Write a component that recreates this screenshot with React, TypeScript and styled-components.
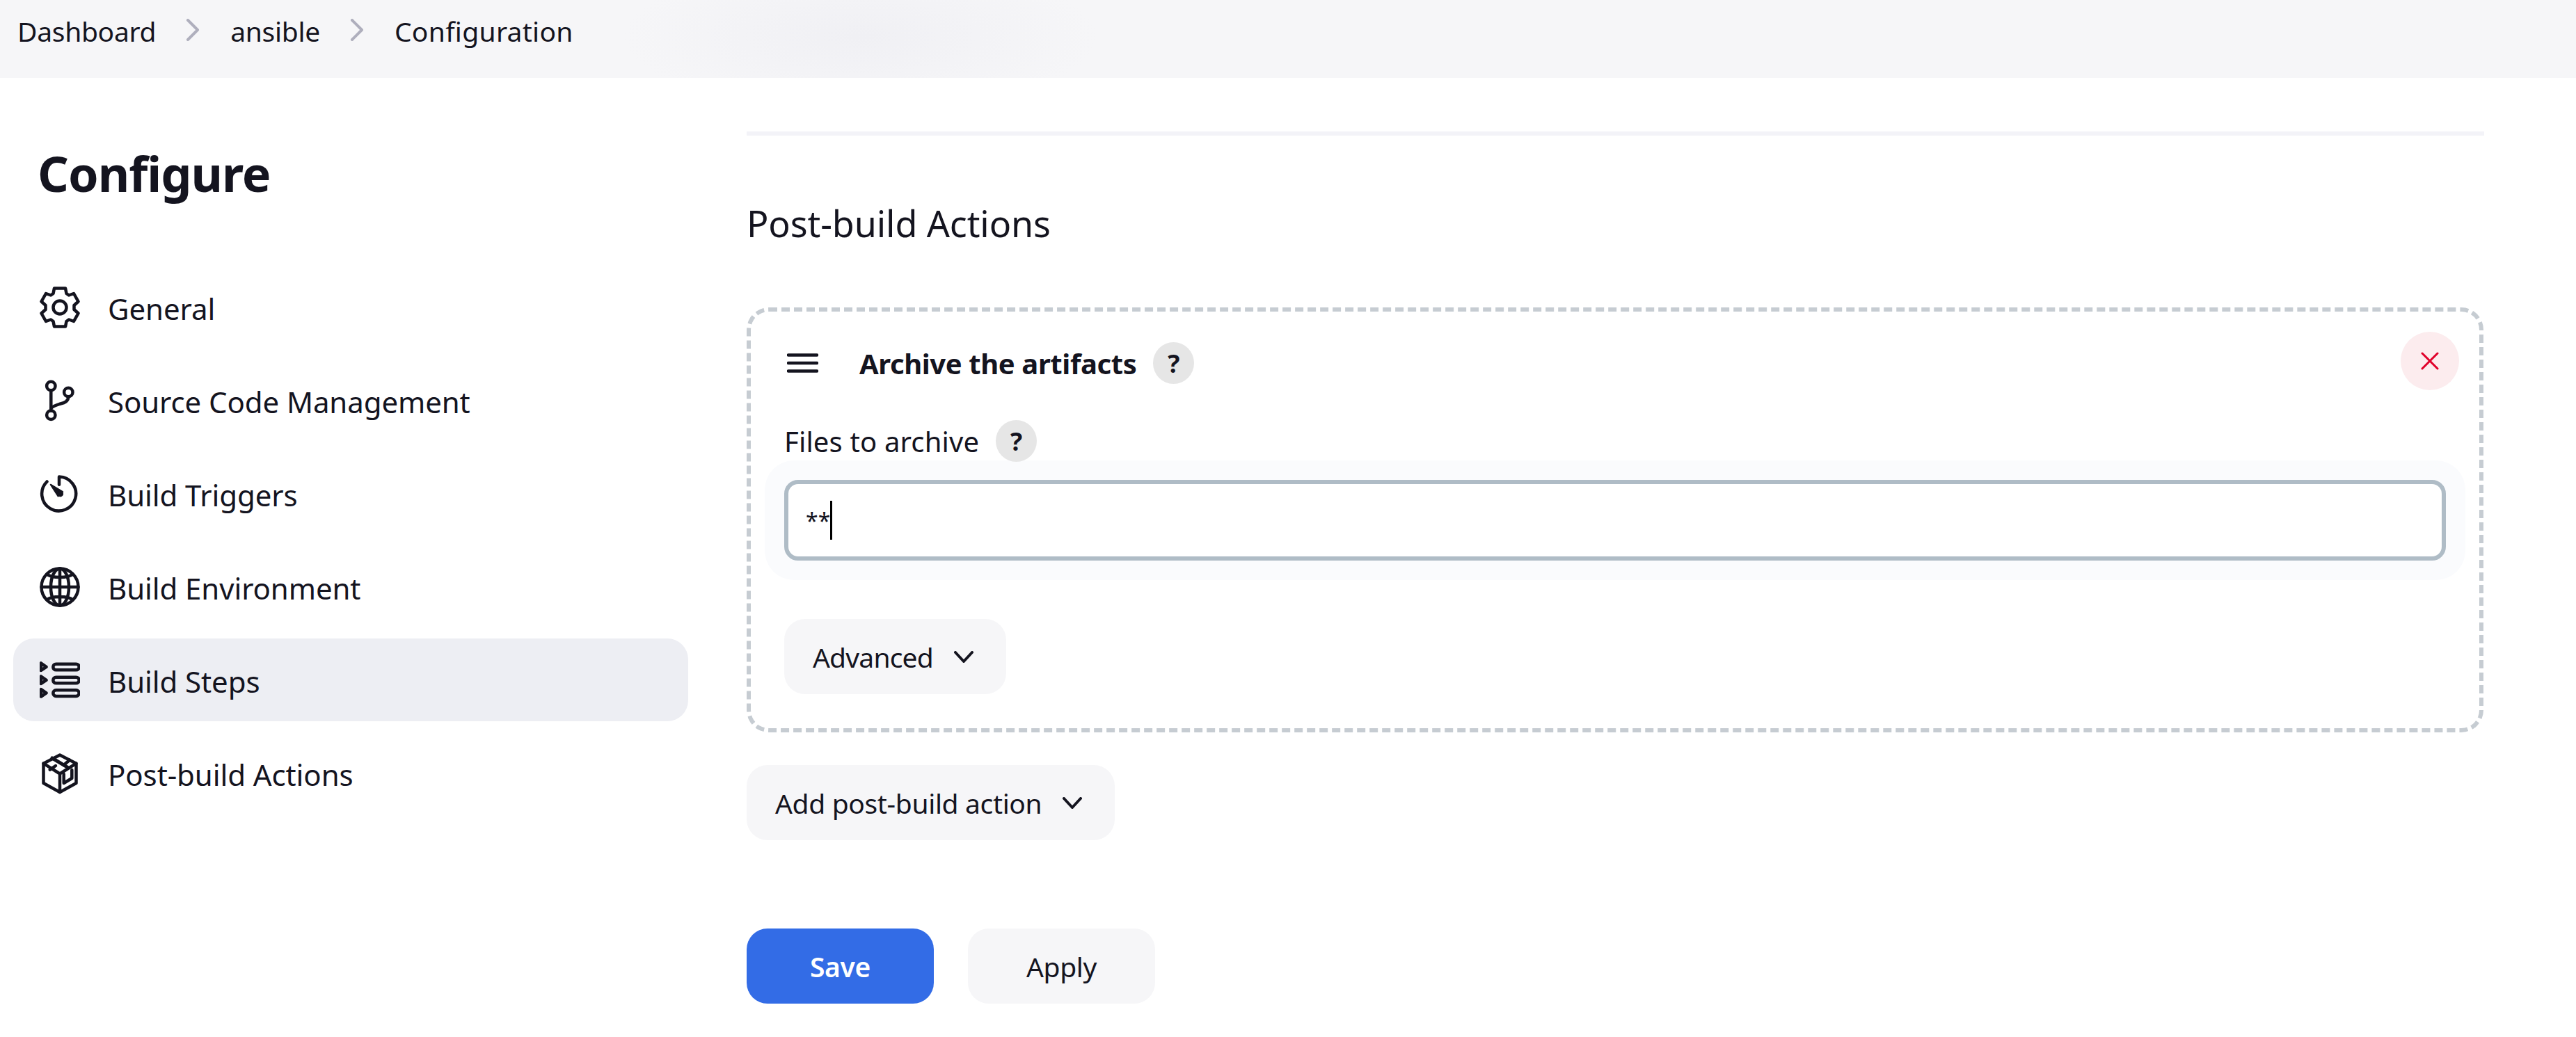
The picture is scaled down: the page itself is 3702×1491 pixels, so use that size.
import styled, { createGlobalStyle } from 'styled-components';

const INK = '#14141f';
const FONT = `'Noto Sans', 'Open Sans', sans-serif`;

const GlobalStyle = createGlobalStyle`
	html, body {
		margin: 0;
		padding: 0;
		background: #fff;
		overflow: hidden;
	}
	body {
		font-family: ${FONT};
		color: ${INK};
	}
`;

const Page = styled.div`
	width: 3702px;
	height: 1491px;
	overflow: hidden;
`;

const TopBar = styled.div`
	height: 112px;
	box-sizing: border-box;
	padding: 23px 0 0 25px;
	display: flex;
	align-items: flex-start;
	background: radial-gradient(ellipse 340px 110px at 1237px 53px, #f0f0f4 0%, #f6f6f8 100%);
`;

const Crumb = styled.div<{ $track?: number }>`
	font-size: 39px;
	line-height: 44px;
	letter-spacing: ${p => p.$track ?? -0.3}px;
	white-space: nowrap;
`;

const CrumbSep = styled.svg`
	width: 20px;
	height: 32px;
	margin: 4px 44px 0 43px;
	flex: none;
`;

const Columns = styled.div`
	display: flex;
	align-items: flex-start;
`;

const Sidebar = styled.nav`
	width: 970px;
	margin-left: 19px;
	flex: none;
`;

const SideTitle = styled.h1`
	margin: 0;
	padding: 89px 0 0 35px;
	font-size: 70px;
	line-height: 96px;
	font-weight: 700;
	letter-spacing: -1px;
`;

const SideList = styled.div`
	margin-top: 85px;
	display: flex;
	flex-direction: column;
	gap: 15px;
`;

const SideItem = styled.div<{ $active?: boolean }>`
	height: 119px;
	box-sizing: border-box;
	padding-left: 38px;
	display: flex;
	align-items: center;
	gap: 40px;
	border-radius: 30px;
	background: ${p => (p.$active ? '#edeef3' : 'transparent')};
	font-size: 42px;
	letter-spacing: -0.1px;
	white-space: nowrap;
`;

const SideLabel = styled.span`
	padding-top: 3px;
`;

const SideIcon = styled.svg`
	width: 58px;
	height: 60px;
	flex: none;
	fill: none;
	stroke: ${INK};
	stroke-width: 4.5;
	stroke-linecap: round;
	stroke-linejoin: round;
`;

const Main = styled.main`
	width: 2497px;
	margin-left: 84px;
	padding-top: 77px;
	flex: none;
`;

const Divider = styled.div`
	height: 6px;
	background: #f3f3f8;
`;

const SectionTitle = styled.h2`
	margin: 96px 0 91px;
	font-size: 52px;
	line-height: 60px;
	font-weight: 400;
	letter-spacing: -0.1px;
`;

const Card = styled.section`
	box-sizing: border-box;
	width: 2496px;
	padding: 44px 20px 49px;
	border: 6px dashed #c6ccd2;
	border-radius: 32px;
`;

const CardHeader = styled.div`
	height: 60px;
	padding: 0 9px 0 32px;
	display: flex;
	align-items: center;
`;

const DragHandle = styled.svg`
	width: 45px;
	height: 30px;
	margin-right: 59px;
	flex: none;
	stroke: ${INK};
	stroke-width: 4.5;
	stroke-linecap: round;
`;

const CardTitle = styled.div`
	font-size: 40px;
	font-weight: 700;
	letter-spacing: -0.4px;
	white-space: nowrap;
`;

const HelpBadge = styled.div`
	position: relative;
	width: 59px;
	height: 60px;
	margin-left: 24px;
	flex: none;
	display: flex;
	align-items: center;
	justify-content: center;
	border-radius: 50%;
	background: #e6e6e6;
	font-size: 36px;
	font-weight: 700;
`;

const CloseButton = styled.button`
	width: 84px;
	height: 84px;
	margin: -6px 0 0 auto;
	padding: 0;
	flex: none;
	display: flex;
	align-items: center;
	justify-content: center;
	border: none;
	border-radius: 50%;
	background: #fcecee;
`;

const CloseMark = styled.svg`
	width: 26px;
	height: 26px;
	stroke: #e0012a;
	stroke-width: 3;
	stroke-linecap: round;
`;

const FieldLabel = styled.div`
	height: 60px;
	margin-top: 52px;
	padding-left: 28px;
	display: flex;
	align-items: center;
	font-size: 40px;
	letter-spacing: 0.15px;
`;

const FieldHalo = styled.div`
	margin-top: -2px;
	padding: 28px;
	border-radius: 42px;
	background: #fafbfd;
`;

const TextBox = styled.div`
	height: 116px;
	box-sizing: border-box;
	padding-left: 25px;
	display: flex;
	align-items: center;
	border: 6px solid #afbcc6;
	border-radius: 20px;
	background: #fff;
	font-size: 32px;
`;

const Caret = styled.span`
	width: 3px;
	height: 56px;
	background: #000;
`;

const DropButton = styled.button<{ $inset?: boolean }>`
	height: 108px;
	margin-left: ${p => (p.$inset ? '28px' : '0')};
	padding: 0 47px 0 41px;
	display: inline-flex;
	align-items: center;
	gap: 30px;
	border: none;
	border-radius: 30px;
	background: #f6f6f8;
	color: ${INK};
	font-family: ${FONT};
	font-size: 39px;
	letter-spacing: ${p => (p.$inset ? '-0.8px' : '-0.35px')};
	white-space: nowrap;
`;

const Chevron = styled.svg`
	width: 28px;
	height: 17px;
	flex: none;
	fill: none;
	stroke: ${INK};
	stroke-width: 4;
	stroke-linecap: round;
	stroke-linejoin: round;
`;

const AdvancedRow = styled.div`
	margin-top: 56px;
`;

const AddRow = styled.div`
	margin-top: 47px;
`;

const FormActions = styled.div`
	margin-top: 127px;
	display: flex;
	gap: 49px;
`;

const ActionButton = styled.button<{ $primary?: boolean }>`
	width: 269px;
	height: 108px;
	padding: 0;
	border: none;
	border-radius: 30px;
	background: ${p => (p.$primary ? '#336ce6' : '#f6f6f8')};
	color: ${p => (p.$primary ? '#fff' : INK)};
	font-family: ${FONT};
	font-size: 39px;
	font-weight: ${p => (p.$primary ? 600 : 400)};
	letter-spacing: -0.35px;
`;

const GearIcon = () => (
	<SideIcon viewBox="0 0 58 60">
		<path d="M21 2.5H37L38.5 10L42 12.5L49 10L55.5 21.5L49.5 27V33L55.5 38.5L49 50L42 47.5L38.5 50L37 57.5H21L19.5 50L16 47.5L9 50L2.5 38.5L8.5 33V27L2.5 21.5L9 10L16 12.5L19.5 10Z" />
		<circle cx="29" cy="30" r="9.5" />
	</SideIcon>
);

const BranchIcon = () => (
	<SideIcon viewBox="0 0 58 60">
		<circle cx="16.3" cy="9" r="6.2" />
		<circle cx="41.3" cy="18" r="6.2" />
		<circle cx="16.3" cy="50.7" r="6.2" />
		<path d="M16.3 15.2V44.5" />
		<path d="M16.3 41C20 37 25 36 30 34.5C36 33 41.3 31 41.3 24.2" />
	</SideIcon>
);

const TimerIcon = () => (
	<SideIcon viewBox="0 0 58 60">
		<path d="M28 16.7V5.5A24.5 24.5 0 1 1 10.5 12.5" />
		<path d="M15.7 16.7L26.5 33.5L33.2 27.2Z" fill={INK} strokeWidth="2" />
		<circle cx="29.7" cy="30" r="3.4" fill={INK} strokeWidth="2" />
	</SideIcon>
);

const GlobeIcon = () => (
	<SideIcon viewBox="0 0 58 60" strokeWidth="3.6">
		<circle cx="29" cy="30" r="26.5" />
		<ellipse cx="29" cy="30" rx="13" ry="26.5" />
		<path d="M29 3.5V56.5M2.5 30H55.5M10.5 11.5C17 17.5 41 17.5 47.5 11.5M10.5 48.5C17 42.5 41 42.5 47.5 48.5" />
	</SideIcon>
);

const StepsIcon = () => (
	<SideIcon viewBox="0 0 58 60" strokeWidth="4">
		{[0, 19, 37.6].map(y => (
			<g key={y} transform={`translate(0 ${y})`}>
				<path d="M2 5.5V16L9.5 10.8Z" />
				<rect x="19.3" y="6.7" width="37.4" height="8.6" rx="4.3" />
			</g>
		))}
	</SideIcon>
);

const PackageIcon = () => (
	<SideIcon viewBox="0 0 58 60" strokeWidth="4">
		<path d="M29 3.5L52.5 15.7V44L29 57L5.5 44V15.7Z" />
		<path d="M5.5 15.7L29 30.5L52.5 15.7M29 30.5V57" />
		<path d="M18 8L40.3 21.3" strokeWidth="5" />
		<path d="M34.7 18L43 10.7M14.7 24.7L23 19" />
		<path d="M34.7 31V44L46.3 37V25" />
	</SideIcon>
);

const navItems = [
	{ label: 'General', icon: <GearIcon /> },
	{ label: 'Source Code Management', icon: <BranchIcon /> },
	{ label: 'Build Triggers', icon: <TimerIcon /> },
	{ label: 'Build Environment', icon: <GlobeIcon /> },
	{ label: 'Build Steps', icon: <StepsIcon />, active: true },
	{ label: 'Post-build Actions', icon: <PackageIcon /> },
];

const Separator = () => (
	<CrumbSep viewBox="0 0 20 32" fill="none" stroke="#afafbd" strokeWidth="4" strokeLinecap="round" strokeLinejoin="round">
		<path d="M3 2L17 16L3 30" />
	</CrumbSep>
);

const DownChevron = () => (
	<Chevron viewBox="0 0 28 17">
		<path d="M2 2L14 15L26 2" />
	</Chevron>
);

const App = () => {
	return (
		<Page>
			<GlobalStyle />
			<TopBar>
				<Crumb>Dashboard</Crumb>
				<Separator />
				<Crumb>ansible</Crumb>
				<Separator />
				<Crumb $track={0.3}>Configuration</Crumb>
			</TopBar>
			<Columns>
				<Sidebar>
					<SideTitle>Configure</SideTitle>
					<SideList>
						{navItems.map(item => (
							<SideItem key={item.label} $active={item.active}>
								{item.icon}
								<SideLabel>{item.label}</SideLabel>
							</SideItem>
						))}
					</SideList>
				</Sidebar>
				<Main>
					<Divider />
					<SectionTitle>Post-build Actions</SectionTitle>
					<Card>
						<CardHeader>
							<DragHandle viewBox="0 0 45 30">
								<path d="M2 3.5H43M2 15H43M2 26.5H43" />
							</DragHandle>
							<CardTitle>Archive the artifacts</CardTitle>
							<HelpBadge>?</HelpBadge>
							<CloseButton>
								<CloseMark viewBox="0 0 26 26">
									<path d="M2 2L24 24M24 2L2 24" />
								</CloseMark>
							</CloseButton>
						</CardHeader>
						<FieldLabel>
							Files to archive
							<HelpBadge>?</HelpBadge>
						</FieldLabel>
						<FieldHalo>
							<TextBox>
								**
								<Caret />
							</TextBox>
						</FieldHalo>
						<AdvancedRow>
							<DropButton $inset>
								Advanced
								<DownChevron />
							</DropButton>
						</AdvancedRow>
					</Card>
					<AddRow>
						<DropButton>
							Add post-build action
							<DownChevron />
						</DropButton>
					</AddRow>
					<FormActions>
						<ActionButton $primary>Save</ActionButton>
						<ActionButton>Apply</ActionButton>
					</FormActions>
				</Main>
			</Columns>
		</Page>
	);
};

export default App;
